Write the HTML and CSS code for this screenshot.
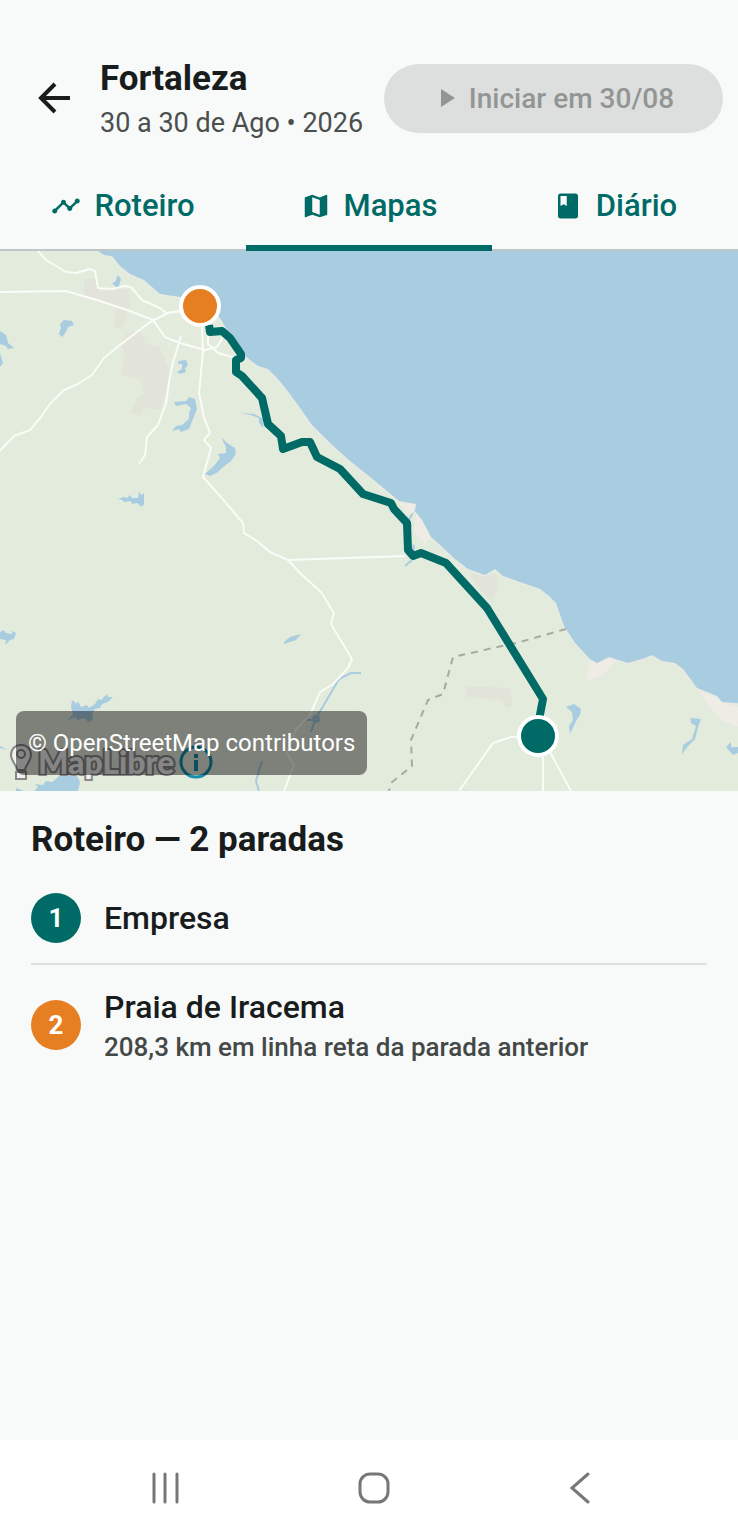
FILE: index.html
```
<!DOCTYPE html>
<html lang="pt-BR">

<head>
    <meta charset="UTF-8">
    <meta name="viewport" content="width=device-width, initial-scale=1.0">
    <title>Fortaleza - Mapas</title>
    <link rel="stylesheet" href="styles.css">
</head>

<body>
    <header class="header">
        <button class="back-btn" aria-label="Voltar">
            <svg viewBox="0 0 32 32" width="32" height="32">
                <path d="M32 16H3M17 2L3 16l14 14" fill="none" stroke="currentColor" stroke-width="4" />
            </svg>
        </button>
        <div class="trip">
            <h1>Fortaleza</h1>
            <p>30 a 30 de Ago • 2026</p>
        </div>
        <button class="start-btn" disabled>
            <svg viewBox="0 0 14 18" width="14" height="18">
                <path d="M0 0l14 9-14 9z" fill="currentColor" />
            </svg>
            Iniciar em 30/08
        </button>
    </header>

    <nav class="tabs">
        <a href="#roteiro">
            <svg viewBox="0 0 24 24" width="30" height="30">
                <path d="M23 8c0 1.1-.9 2-2 2-.18 0-.35-.02-.51-.07l-3.56 3.55c.05.16.07.34.07.52 0 1.1-.9 2-2 2s-2-.9-2-2c0-.18.02-.36.07-.52l-2.55-2.55c-.16.05-.34.07-.52.07s-.36-.02-.52-.07l-4.55 4.56c.05.16.07.33.07.51 0 1.1-.9 2-2 2s-2-.9-2-2 .9-2 2-2c.18 0 .35.02.51.07l4.56-4.55C8.02 9.36 8 9.18 8 9c0-1.1.9-2 2-2s2 .9 2 2c0 .18-.02.36-.07.52l2.55 2.55c.16-.05.34-.07.52-.07s.36.02.52.07l3.55-3.56C19.02 8.35 19 8.18 19 8c0-1.1.9-2 2-2s2 .9 2 2z" fill="currentColor" />
            </svg>
            Roteiro
        </a>
        <a href="#mapas" class="active">
            <svg viewBox="0 0 24 24" width="30" height="30">
                <path d="M20.5 3l-.16.03L15 5.1 9 3 3.36 4.9c-.21.07-.36.25-.36.48V20.5c0 .28.22.5.5.5l.16-.03L9 18.9l6 2.1 5.64-1.9c.21-.07.36-.25.36-.48V3.5c0-.28-.22-.5-.5-.5zM15 19l-6-2.11V5l6 2.11V19z" fill="currentColor" />
            </svg>
            Mapas
        </a>
        <a href="#diario">
            <svg viewBox="0 0 24 24" width="30" height="30">
                <path d="M18 2H6c-1.1 0-2 .9-2 2v16c0 1.1.9 2 2 2h12c1.1 0 2-.9 2-2V4c0-1.1-.9-2-2-2zM6 4h5v8l-2.5-1.5L6 12V4z" fill="currentColor" />
            </svg>
            Diário
        </a>
    </nav>

    <main>
        <section class="map">
            <svg class="map-canvas" viewBox="0 251 738 540" role="img" aria-label="Mapa da rota">
                <rect class="land" y="251" width="738" height="540" />

                <!-- urban areas -->
                <g class="urban">
                    <path d="M84 280l12-2 4 14 16-4 12 2 2 14-6 22-10 3 2-22-16-8-16-2z" />
                    <path d="M126 334l14-4 6 14 14 4 10 24-3 18-6 20-16-2-6 8-8-4 6-14 8-4-4-14-20-6 4-20-4-10z" />
                    <path d="M466 686l44 2 3 18-6 2-6-8-34-3z" />
                    <path d="M468 570l28 4 2 14-6 14-16-16z" />
                </g>

                <!-- ocean -->
                <path class="water coast" d="M98 251l6 4 8 1 8 10 10 8 14 6 16 14 20 3 20 3 20 18 6 10 9 15 10 13 13 10 10 3 10 10 12 15 10 14 12 17 18 18 20 18 25 20 24 20 17 3-1 7 6 8 9 17 10 9 15 14 13 10 17 6 10-6 8 7 17 6 20 7 9 7 7 7 8 23 11 17 15 16 7 4 12-6 19 6 17-5 7-3 10 6 13 2 8 6 14 19 20 8 5 6 26 2V240H98z" />

                <!-- lakes and rivers -->
                <g class="water">
                    <path d="M118 275l3 4-2 6 2 3-5-1-4-4 3-1z" />
                    <path d="M60 324l4-4 8 1 2 4-6 2-2 5-4 5-3-3 2-6z" />
                    <path d="M0 331l6 4 2 8 6 5-6 1-2-3-6-2zM0 353l3 10-3 4z" />
                    <path d="M179 361l7-1 2 5-3 3 1 4-6 2-3-2 5-3 0-5-4 0z" />
                    <path d="M174 402l12-1 3-4 6 2 2 10-4 10-4 10-8 3-2-3-7 2 4-5 6-1 7-6 0-6 2-5-5-4-10 2z" />
                    <path d="M221 437l6 6 8 5 1 6-5 7-8 6-5 5-8 4-5-2 9-8 6-8-2-4 8-1 0-6z" />
                    <path d="M239 413l15 1 10 5-1 9-4-5 0-5-8-3z" />
                    <path d="M118 499l6-2 3 1 3-3 2 3 6 0 1-7 2 4 3-2 0 11-2 3-5-4-4 1-3-3-6 1-2-2z" />
                    <path d="M0 632l4-2 2 3 6 1 0-3 4 2-2 6-4 1-5 5 1-5-6-1z" />
                    <path d="M284 642l6-5 11-3-5 6-12 4z" />
                    <path d="M72 700l5 4 1-3 3 6 6-2 2 3 6-4 3-5 3 1 6-6 1 3 5 0-5 5-6 2-2 4-5 1-3 5 1 6-5 2-3-4-8 2-1-3-8 3 5-6-2-7z" />
                    <path d="M62 773l14 1 4 8-2 9H34l4-4-3-3 8 1 3-4 6 1 4-3zM0 746l8 4-8-2zM16 788l8 3h-8z" />
                    <path d="M566 707l8-3 7 5-1 6-4 6-6 13-1-8 4-6-1-8z" />
                    <path d="M690 718l11 1-3 8-3 12-6 6-7 9 1-9 9-6 4-13-5-3z" />
                    <path d="M726 747l5-5 0 5 7 0v6l-5 2z" />
                    <circle cx="316" cy="719" r="4" />
                    <path d="M407 516l5 9-2 10-4-4zM413 544l2 2-1 8-3-3z" />
                </g>
                <g class="river">
                    <path d="M361 673l-10 0-12 6-14 24-10 17-4 12M306 720h10M262 761l-6 20 3 10M414 510l-6 12M412 560l-7 6" />
                </g>

                <!-- beaches -->
                <path class="sand" d="M588 661l9 3 12-6 8 3-15 14-16 7zM699 691l18 6 5 6 16 4v20l-15-6-14-14zM398 503l17 1-1 8-4 3zM416 514l6 6 9 17-6 7-11-12z" />

                <!-- roads -->
                <g class="roads">
                    <path d="M38 251l8 9 20 12 10 1 14-4 5 2 3 17 14 1 13-3 6 1 11 13 18 8 6 5 16-2" />
                    <path d="M0 292l66-1 34 10 30 10 23 9 12 17 15 6 25 7 12-3 6-10" />
                    <path d="M0 451l5-6 9-9 16-6 10-12 10-14 14-14 14-6 14-9 12-17 16-13 30-23 18-9 32-5" />
                    <path d="M181 336l-9 30-3 16-3 21-8 22-11 12-2 18-6 9" />
                    <path d="M202 325l1 27-4 41 5 24 6 16-6 7 7 8-8 29 17 19 23 27 1 10 13 8 13 11 18 8 14 15 19 17 13 21-3 11 21 35-4 9-15 16-13 8-10 23-14 14-9 24 7 12-10 26" />
                    <path d="M208 334v10l10 9 14 4h6M288 560l117-4M538 736l-27 1-18 6-34 48M543 750v41M550 752l21 39" />
                </g>

                <path class="border" d="M566 629l-46 13-67 15-10 37-15 6-17 40 1 26-21 17-2 8" />
                <path class="route" d="M209 325l1 7 12-1 8 7 11 16v4l-5 2v12l6 4 20 22 6 26 13 12 2 13 19-7 8 0 7 15 23 12 23 25 28 9 3 6 13 14 1 27 5 6 8-3 25 10 41 45 56 91-5 26" />

                <circle class="stop stop-end" cx="200" cy="306" r="19" />
                <circle class="stop stop-start" cx="538" cy="736" r="19" />
            </svg>

            <div class="map-logo">
                <svg class="pin" viewBox="0 0 24 38" width="24" height="38">
                    <path d="M12 2c6 0 10 4 10 10 0 6-5 9-6 15H8C7 21 2 18 2 12 2 6 6 2 12 2zM7 29h10v7H7z" />
                    <circle cx="12" cy="11" r="4" />
                </svg>
                <span class="logo-text">MapLibre</span>
                <button class="info-btn" aria-label="Informações do mapa">
                    <svg viewBox="0 0 34 34" width="34" height="34">
                        <circle cx="17" cy="17" r="15" fill="none" stroke="currentColor" stroke-width="3" />
                        <path d="M15 9h4v4h-4zM15 15h4v11h-4z" fill="currentColor" />
                    </svg>
                </button>
            </div>
            <div class="attribution">© OpenStreetMap contributors</div>
        </section>

        <section class="stops">
            <h2>Roteiro — 2 paradas</h2>
            <ol>
                <li>
                    <span class="badge badge-start">1</span>
                    <div>
                        <h3>Empresa</h3>
                    </div>
                </li>
                <li>
                    <span class="badge badge-end">2</span>
                    <div>
                        <h3>Praia de Iracema</h3>
                        <p>208,3 km em linha reta da parada anterior</p>
                    </div>
                </li>
            </ol>
        </section>
    </main>

    <footer class="system-nav">
        <button aria-label="Recentes">
            <svg viewBox="0 0 34 34" width="34" height="34">
                <path d="M4 3v28M15 3v28M27 3v28" />
            </svg>
        </button>
        <button aria-label="Início">
            <svg viewBox="0 0 34 34" width="34" height="34">
                <rect x="3" y="3" width="28" height="28" rx="10" />
            </svg>
        </button>
        <button aria-label="Voltar">
            <svg viewBox="0 0 34 34" width="34" height="34">
                <path d="M24 3L8 17l16 14" />
            </svg>
        </button>
    </footer>
</body>

</html>
```
FILE: styles.css
```
* {
    margin: 0;
    padding: 0;
    box-sizing: border-box;
}

body {
    display: flex;
    flex-direction: column;
    min-height: 100vh;
    font-family: Roboto, "Liberation Sans", sans-serif;
    background-color: #f8faf9;
    color: #191c1c;
}

button {
    font-family: inherit;
    border: none;
    background: none;
}

svg {
    display: block;
    flex-shrink: 0;
}

.header {
    display: flex;
    align-items: center;
    padding: 51px 15px 17px 38px;
}

.back-btn {
    color: #191c1c;
    margin-right: 30px;
}

.trip {
    flex: 1;
    padding-top: 6px;
    white-space: nowrap;
}

.trip h1 {
    font-size: 35px;
    line-height: 44px;
    font-weight: 700;
}

.trip p {
    font-size: 27px;
    line-height: 44px;
    color: #4a4f4e;
}

.start-btn {
    display: flex;
    align-items: center;
    justify-content: center;
    gap: 14px;
    width: 339px;
    height: 69px;
    padding-left: 8px;
    border-radius: 35px;
    background-color: #dddfde;
    color: #929594;
    font-size: 28px;
    font-weight: 500;
}

.tabs {
    display: grid;
    grid-template-columns: repeat(3, 1fr);
    border-bottom: 2px solid #bec9c7;
}

.tabs a {
    display: flex;
    align-items: center;
    justify-content: center;
    gap: 13px;
    height: 89px;
    padding-top: 4px;
    margin-bottom: -2px;
    border-bottom: 6px solid transparent;
    color: #006a66;
    font-size: 31px;
    font-weight: 500;
    text-decoration: none;
}

.tabs .active {
    border-bottom-color: #006a66;
}

.map {
    position: relative;
}

.map-canvas {
    width: 100%;
    height: auto;
}

.land {
    fill: #e3ebdc;
}

.urban {
    fill: #e3e4d9;
}

.water {
    fill: #a8cce0;
}

.coast {
    stroke: #e9ebe3;
    stroke-width: 3;
    paint-order: stroke;
}

.sand {
    fill: #efebe5;
}

.river {
    fill: none;
    stroke: #a8cce0;
    stroke-width: 2;
}

.roads {
    fill: none;
    stroke: #fafcf7;
    stroke-width: 2;
    stroke-linejoin: round;
}

.border {
    fill: none;
    stroke: #a5aba0;
    stroke-width: 2;
    stroke-dasharray: 7 6;
}

.route {
    fill: none;
    stroke: #006a66;
    stroke-width: 8;
    stroke-linejoin: round;
}

.stop {
    stroke: #fff;
    stroke-width: 4;
}

.stop-start {
    fill: #006a66;
}

.stop-end {
    fill: #e67e22;
}

.map-logo {
    position: absolute;
    left: 9px;
    bottom: 10px;
    display: flex;
    align-items: center;
}

.pin {
    fill: #f2f2f2;
    stroke: #888;
    stroke-width: 2;
}

.logo-text {
    margin: 0 5px;
    font-family: Lato, sans-serif;
    font-size: 32px;
    line-height: 36px;
    font-weight: 900;
    color: #f2f2f2;
    -webkit-text-stroke: 4px #888;
    paint-order: stroke fill;
}

.info-btn {
    color: #1590ad;
}

.attribution {
    position: absolute;
    left: 16px;
    bottom: 16px;
    padding: 0 12px;
    border-radius: 8px;
    background-color: rgba(0, 0, 0, 0.45);
    color: #fff;
    font-size: 24px;
    line-height: 64px;
}

.stops {
    padding: 24px 31px;
}

.stops h2 {
    margin-bottom: 8px;
    font-size: 35px;
    line-height: 50px;
}

.stops ol {
    list-style: none;
}

.stops li {
    display: flex;
    align-items: center;
    gap: 23px;
    padding: 20px 0;
}

.stops li + li {
    border-top: 2px solid #dde1e0;
}

.stops h3 {
    font-size: 32px;
    line-height: 44px;
    font-weight: 500;
}

.stops p {
    font-size: 26px;
    line-height: 36px;
    font-weight: 500;
    color: #444948;
}

.badge {
    width: 50px;
    height: 50px;
    border-radius: 50%;
    color: #fff;
    font-size: 26px;
    line-height: 50px;
    font-weight: 700;
    text-align: center;
}

.badge-start {
    background-color: #006a66;
}

.badge-end {
    background-color: #e67e22;
}

.system-nav {
    display: flex;
    justify-content: space-between;
    margin-top: auto;
    padding: 31px 140px 28px 150px;
    background-color: #fff;
}

.system-nav svg {
    fill: none;
    stroke: #777;
    stroke-width: 3;
    stroke-linecap: round;
}
```
